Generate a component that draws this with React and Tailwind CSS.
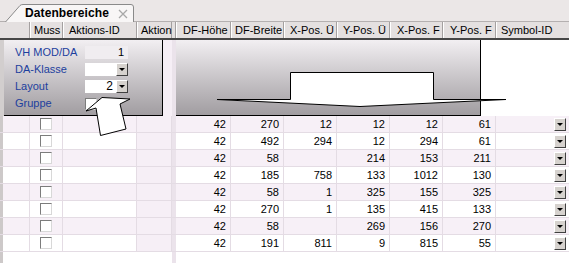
import React from 'react'

const rows = [
  ['42', '270', '12', '12', '12', '61'],
  ['42', '492', '294', '12', '294', '61'],
  ['42', '58', '', '214', '153', '211'],
  ['42', '185', '758', '133', '1012', '130'],
  ['42', '58', '1', '325', '155', '325'],
  ['42', '270', '1', '135', '415', '133'],
  ['42', '58', '', '269', '156', '270'],
  ['42', '191', '811', '9', '815', '55'],
]

const numCols = [
  { label: 'DF-Höhe', w: 'w-[55px]', pad: 'pl-[6px]' },
  { label: 'DF-Breite', w: 'w-[53px]', pad: 'pl-[3px]' },
  { label: 'X-Pos. Ü', w: 'w-[53px]', pad: 'pl-[5px]' },
  { label: 'Y-Pos. Ü', w: 'w-[53px]', pad: 'pl-[5px]' },
  { label: 'X-Pos. F', w: 'w-[53px]', pad: 'pl-[6px]' },
  { label: 'Y-Pos. F', w: 'w-[53px]', pad: 'pl-[6px]' },
]

function DropButton() {
  return (
    <div className="w-[12px] h-[13px] bg-[#d6d2ce] border border-t-white border-l-white border-b-[#404040] border-r-[#404040] flex items-center justify-center">
      <div className="w-0 h-0 border-l-[3px] border-r-[3px] border-t-[3px] border-l-transparent border-r-transparent border-t-black" />
    </div>
  )
}

function Checkbox() {
  return (
    <div className="w-[12px] h-[12px] bg-white border border-t-[#7c7c7c] border-l-[#7c7c7c] border-b-[#d8d8d8] border-r-[#d8d8d8]" />
  )
}

function Field({ label, children }) {
  return (
    <div className="flex items-center h-[17px]">
      <div className="w-[70px] text-[#1d3f9e]">{label}</div>
      {children}
    </div>
  )
}

export default function App() {
  return (
    <div className="relative w-[569px] h-[263px] overflow-hidden bg-white text-[11px] text-black font-['Liberation_Sans',Arial,sans-serif]">
      {/* Tab strip */}
      <div className="h-[22px] bg-[#ebe7e7] border-b border-[#b4b0b0] pt-[4px] pl-[5px]">
        <div className="relative w-[129px] h-[18px] flex items-center pl-[20px]">
          <svg className="absolute inset-0" width="129" height="18" viewBox="0 0 129 18">
            <path d="M0.5 18 L15 1.5 Q16 0.5 18 0.5 L126 0.5 Q128.5 0.5 128.5 3 L128.5 18" fill="#f8f6f6" stroke="#8a8a8a" />
          </svg>
          <span className="relative font-bold text-[12px] tracking-[0.1px]">Datenbereiche</span>
          <svg className="relative ml-[9px] mt-[1px]" width="10" height="10" viewBox="0 0 10 10">
            <path d="M1 1 L9 9 M9 1 L1 9" stroke="#a8a8a8" strokeWidth="1.3" />
          </svg>
        </div>
      </div>

      {/* Header */}
      <div className="flex h-[18px] bg-[#e4e0e0] border-b-2 border-b-[#464646]">
        <div className="w-[30px] border-r border-[#a4a0a0]" />
        <div className="w-[33px] border-r border-[#a4a0a0] border-l border-l-white pl-[3px] leading-[16px]">Muss</div>
        <div className="w-[74px] border-r border-[#a4a0a0] border-l border-l-white pl-[5px] leading-[16px]">Aktions-ID</div>
        <div className="w-[35px] border-r border-[#a4a0a0] border-l border-l-white pl-[3px] leading-[16px]">Aktion</div>
        <div className="w-[4px] border-r border-[#a4a0a0]" />
        {numCols.map((c) => (
          <div key={c.label} className={`${c.w} ${c.pad} border-r border-[#a4a0a0] border-l border-l-white leading-[16px] whitespace-nowrap`}>
            {c.label}
          </div>
        ))}
        <div className="flex-1 border-l border-l-white pl-[4px] leading-[16px]">Symbol-ID</div>
      </div>

      {/* Detail panels */}
      <div className="flex h-[76px]">
        <div className="w-[4px] bg-[#d2cece]" />
        <div className="w-[159px] bg-linear-to-b from-[#f2eff2] to-[#a19da1] border-r border-b border-black pt-[4px] pl-[11px]">
          <Field label="VH MOD/DA">
            <div className="w-[43px] h-[13px] bg-[#f0edf0] text-right pr-[4px] leading-[13px]">1</div>
          </Field>
          <Field label="DA-Klasse">
            <div className="flex w-[43px] h-[13px]">
              <div className="flex-1 bg-white" />
              <DropButton />
            </div>
          </Field>
          <Field label="Layout">
            <div className="flex w-[43px] h-[13px]">
              <div className="flex-1 bg-white text-right pr-[3px] leading-[13px] text-[12px]">2</div>
              <DropButton />
            </div>
          </Field>
          <Field label="Gruppe">
            <Checkbox />
          </Field>
        </div>
        <div className="w-[9px] bg-[#f6eff6]" />
        <div className="w-[4px] bg-[#ebe3eb]" />
        <div className="w-[305px] bg-linear-to-b from-[#f2eff2] to-[#a19da1] border-r border-b border-black" />
        <div className="flex-1 bg-white" />
      </div>

      {/* Rows */}
      <div>
        {rows.map((r, i) => {
          const bg = i % 2 === 0 ? 'bg-[#f7f0f7]' : 'bg-white'
          return (
            <div key={i} className={`flex h-[17px] border-b border-[#e4dce4] ${bg}`}>
              <div className="w-[30px] border-l-[3px] border-l-[#cdc9c9] border-r border-r-[#e4dce4]" />
              <div className="w-[33px] border-r border-[#e4dce4] flex items-center justify-center">
                <Checkbox />
              </div>
              <div className="w-[74px] border-r border-[#e4dce4]" />
              <div className="w-[35px] bg-[#f6eff6] border-r border-[#e4dce4]" />
              <div className="w-[4px] bg-[#ebe3eb]" />
              {r.map((v, j) => (
                <div key={j} className={`${numCols[j].w} border-r border-[#e4dce4] text-right pr-[4px] leading-[16px]`}>
                  {v}
                </div>
              ))}
              <div className="flex-1 flex items-center justify-end pr-[3px]">
                <DropButton />
              </div>
            </div>
          )
        })}
        <div className="flex h-[11px]">
          <div className="w-[172px] border-l-[3px] border-l-[#cdc9c9]" />
          <div className="w-[4px] bg-[#ebe3eb]" />
        </div>
      </div>

      {/* Drawn overlay: arrow + layout sketch */}
      <svg className="absolute left-0 top-0 pointer-events-none" width="569" height="263" viewBox="0 0 569 263">
        <polygon points="217,99.5 290.5,99.5 290.5,72.5 433.5,72.5 433.5,99.5 506,99.5 360,106.5" fill="white" stroke="black" strokeWidth="1" />
        <polygon points="86,111 102,97.5 130,99 120,104 126,129 100.5,135.5 96,108" fill="white" stroke="black" strokeWidth="1" />
      </svg>
    </div>
  )
}
